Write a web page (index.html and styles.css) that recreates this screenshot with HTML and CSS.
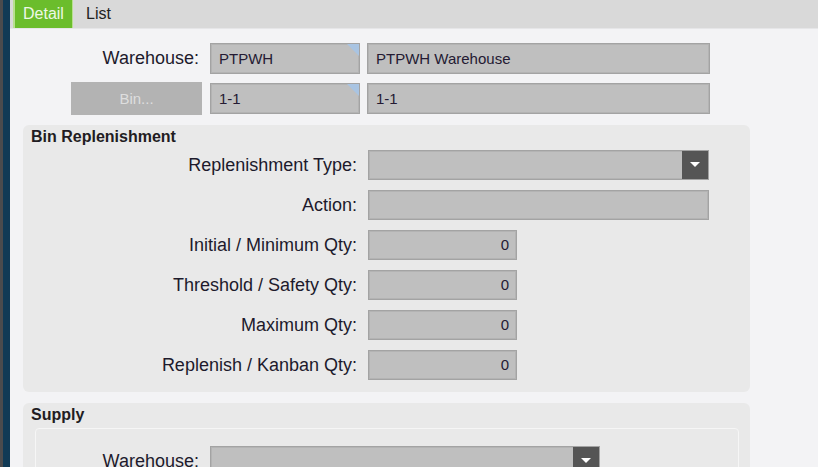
FILE: index.html
```html
<!DOCTYPE html>
<html lang="en">
<head>
  <meta charset="UTF-8">
  <title>Bin Replenishment</title>
  <link rel="stylesheet" href="styles.css">
</head>
<body>
  <div class="strip"><div class="strip-gray"></div><div class="strip-navy"></div></div>
  <div class="main">
    <div class="tabs">
      <div class="tab active">Detail</div>
      <div class="tab">List</div>
    </div>
    <div class="content">
      <div class="head">
        <div class="label">Warehouse:</div>
        <div class="field key">PTPWH</div>
        <div class="field wide">PTPWH Warehouse</div>
        <div class="btn-cell"><button class="bin-btn">Bin...</button></div>
        <div class="field key">1-1</div>
        <div class="field wide">1-1</div>
      </div>

      <div class="panel">
        <div class="panel-title">Bin Replenishment</div>
        <div class="form">
          <div class="label">Replenishment Type:</div>
          <div class="field wide select"><span class="drop"><svg width="10" height="6" viewBox="0 0 10 6"><path d="M0 0h10L5 5z" fill="#fff"/></svg></span></div>
          <div class="label">Action:</div>
          <div class="field wide"></div>
          <div class="label">Initial / Minimum Qty:</div>
          <div class="field qty">0</div>
          <div class="label">Threshold / Safety Qty:</div>
          <div class="field qty">0</div>
          <div class="label">Maximum Qty:</div>
          <div class="field qty">0</div>
          <div class="label">Replenish / Kanban Qty:</div>
          <div class="field qty">0</div>
        </div>
      </div>

      <div class="panel supply">
        <div class="panel-title">Supply</div>
        <div class="inner">
          <div class="label">Warehouse:</div>
          <div class="field select supply-wh"><span class="drop"><svg width="10" height="6" viewBox="0 0 10 6"><path d="M0 0h10L5 5z" fill="#fff"/></svg></span></div>
        </div>
      </div>
    </div>
  </div>
</body>
</html>
```

FILE: styles.css
```css
html, body { margin: 0; height: 100%; overflow: hidden; }
body { display: flex; font-family: "Liberation Sans", Arial, sans-serif; color: #1d1a2c; background: #f3f3f5; }

.strip { display: flex; width: 10px; flex-shrink: 0; }
.strip-gray { width: 3px; background: #4b4b4d; }
.strip-navy { width: 7px; background: #113a55; }

.main { flex: 1; display: flex; flex-direction: column; }

.tabs { display: flex; height: 28px; background: #d9d9d9; border-bottom: 1px solid #e6e6e8; padding-left: 3px; }
.tab { padding: 0 13px; font-size: 16px; line-height: 28px; color: #222; }
.tab.active { width: 60px; box-sizing: border-box; padding: 0 0 0 10px; background: #6bbd2c; color: #eef8e6; box-shadow: inset 2px 0 0 #b8e08f, inset -1px 0 0 #b8e08f; }

.content { padding-top: 14px; }

.head { display: grid; grid-template-columns: 192px 150px 342px; column-gap: 8px; row-gap: 8px; align-items: center; }
.head .field.wide { margin-left: -1px; }
.label { text-align: right; font-size: 18px; padding-right: 3px; white-space: nowrap; }

.field { box-sizing: border-box; height: 31px; background: #bfbfbf; border: 1px solid #a3a3a3; box-shadow: inset 0 0 0 1px #b3b3b3; font-size: 15px; line-height: 29px; padding: 0 8px; color: #241a33; position: relative; }
.field.key::after { content: ""; position: absolute; top: 0; right: 0; border-top: 12px solid #a9c4e2; border-left: 12px solid transparent; }

.btn-cell { display: flex; justify-content: flex-end; }
.bin-btn { width: 131px; height: 33px; border: none; background: #b3b3b3; color: #dedede; font-family: inherit; font-size: 15px; }

.panel { margin: 10px 68px 0 13px; background: #e9e9e9; border-radius: 6px; padding: 3px 8px 12px; }
.panel-title { font-size: 16px; font-weight: bold; line-height: 17px; color: #221c22; }

.form { display: grid; grid-template-columns: 326px auto; column-gap: 11px; row-gap: 10px; margin-top: 5px; justify-items: start; align-items: center; }
.form .label { justify-self: stretch; padding-right: 0; }
.form .field { height: 30px; line-height: 28px; }
.form .wide { width: 341px; }
.form .qty { width: 149px; text-align: right; padding-right: 7px; }

.select .drop { position: absolute; top: 0; right: 0; bottom: 0; width: 26px; background: #555; display: flex; align-items: center; justify-content: center; }

.supply { margin-top: 11px; padding-bottom: 20px; }
.inner { margin: 5px 3px 0 4px; border: 1px solid #f6f6f6; border-radius: 4px; padding: 17px 0 10px; display: grid; grid-template-columns: 163px 390px; column-gap: 11px; align-items: center; }
.inner .label { padding-right: 0; }
.supply-wh { height: 30px; }
```
